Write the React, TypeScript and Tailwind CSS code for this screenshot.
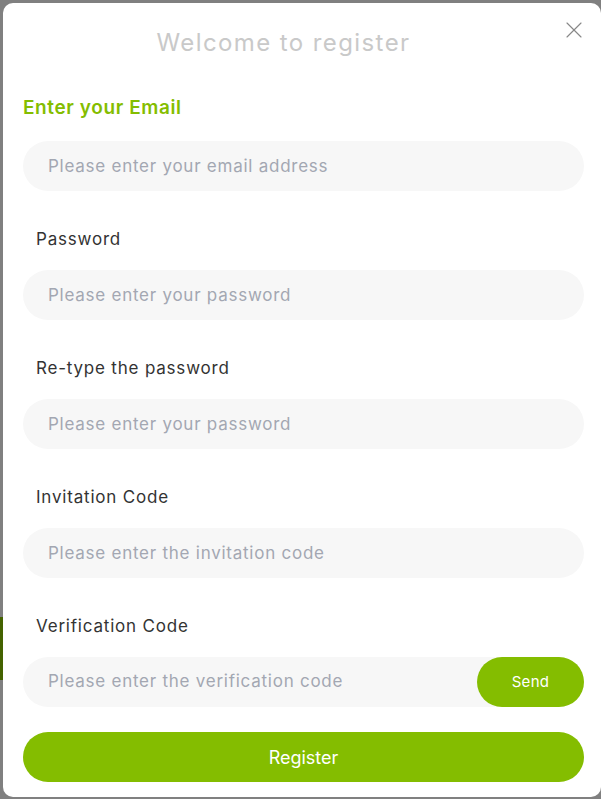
import { X } from 'lucide-react';

const fields = [
  { label: 'Password', placeholder: 'Please enter your password', type: 'password' },
  { label: 'Re-type the password', placeholder: 'Please enter your password', type: 'password' },
  { label: 'Invitation Code', placeholder: 'Please enter the invitation code', type: 'text' },
];

const inputClass =
  'h-[50px] w-full rounded-full bg-[#f7f7f7] px-[25px] text-[17px] tracking-[0.75px] text-[#333] outline-none placeholder:text-[#a3a7b2]';

export default function App() {
  return (
    <div className="relative flex h-[799px] w-[601px] bg-[#808080] p-[3px] pr-0 pb-[2px] font-['Inter',sans-serif]">
      {/* page behind the overlay */}
      <div className="absolute left-0 top-[617px] h-[63px] w-[3px] bg-[#446200]"></div>

      <div className="flex flex-1 flex-col rounded-[10px] bg-white">
        <div className="flex">
          <h2 className="flex-1 pl-[7px] pt-[25px] text-center text-[24px] leading-[30px] tracking-[1.4px] text-[#c9c9c9]">
            Welcome to register
          </h2>
          <button className="flex w-[44px] justify-start pl-[3px] pt-[13px] text-[#888]">
            <X size={28} strokeWidth={1} />
          </button>
        </div>

        <div className="flex flex-col px-[20px] pr-[17px]">
          <h3 className="mt-[36px] text-[19px] font-semibold leading-[28px] tracking-[0.6px] text-[#84bd00]">
            Enter your Email
          </h3>
          <input className={`mt-[19px] ${inputClass}`} placeholder="Please enter your email address" />

          {fields.map((f) => (
            <div key={f.label} className="flex flex-col">
              <label className="mt-[36px] pl-[13px] text-[17px] leading-[24px] tracking-[0.8px] text-[#333]">
                {f.label}
              </label>
              <input type={f.type} className={`mt-[19px] ${inputClass}`} placeholder={f.placeholder} />
            </div>
          ))}

          <label className="mt-[36px] pl-[13px] text-[17px] leading-[24px] tracking-[0.8px] text-[#333]">
            Verification Code
          </label>
          <div className="mt-[19px] flex h-[50px] rounded-full bg-[#f7f7f7]">
            <input
              className="min-w-0 flex-1 bg-transparent px-[25px] text-[17px] tracking-[0.75px] text-[#333] outline-none placeholder:text-[#a3a7b2]"
              placeholder="Please enter the verification code"
            />
            <button className="w-[107px] rounded-full bg-[#84bd00] text-[15px] tracking-[0.3px] text-white">Send</button>
          </div>

          <button className="mt-[25px] h-[50px] w-full rounded-full bg-[#84bd00] text-[18px] text-white">
            Register
          </button>
        </div>
      </div>
    </div>
  );
}
